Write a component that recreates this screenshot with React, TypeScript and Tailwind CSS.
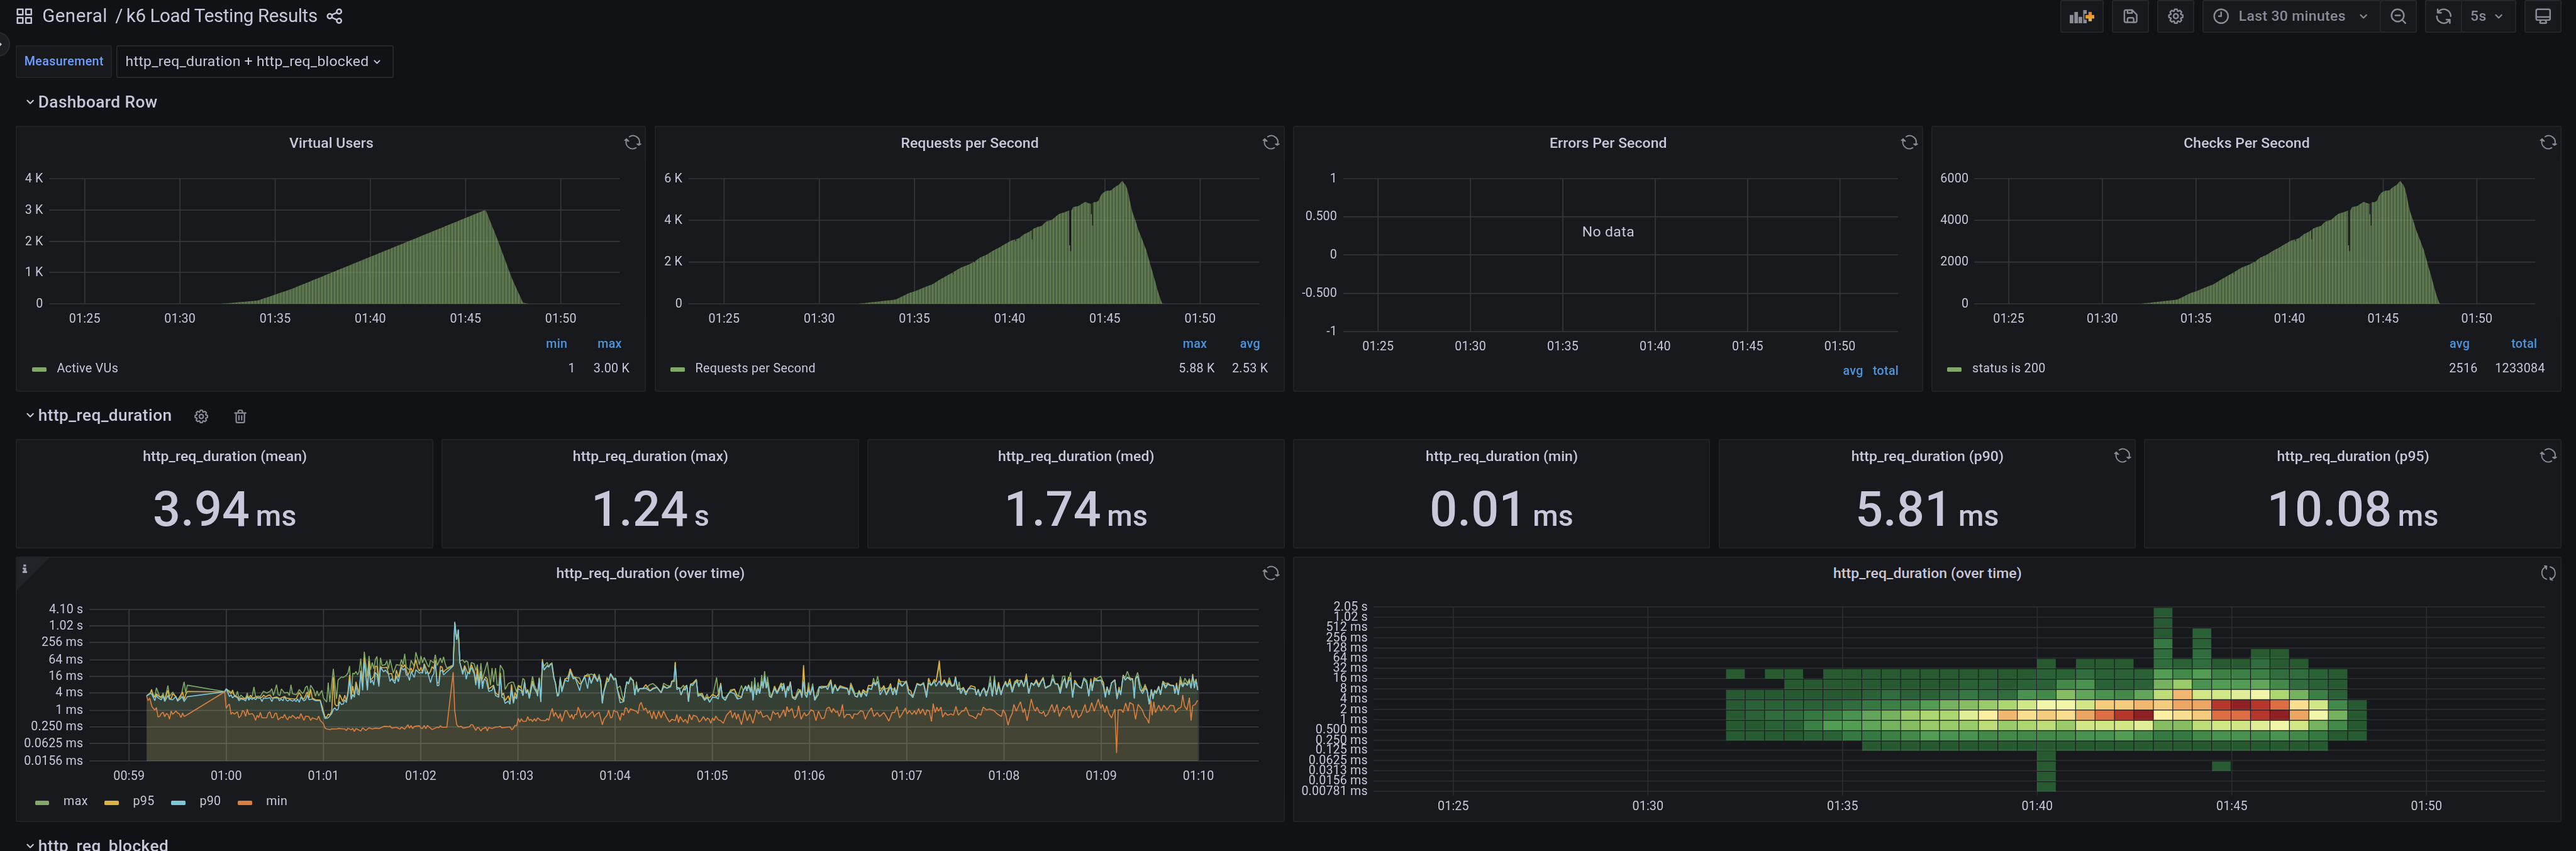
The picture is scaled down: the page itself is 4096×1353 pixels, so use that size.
import { Fragment, type ReactNode } from "react";

type Pt = [number, number];

/* ---------- icons ---------- */

const ICONS = {
  apps: "M10,13H3a1,1,0,0,0-1,1v7a1,1,0,0,0,1,1h7a1,1,0,0,0,1-1V14A1,1,0,0,0,10,13ZM9,20H4V15H9ZM21,2H14a1,1,0,0,0-1,1v7a1,1,0,0,0,1,1h7a1,1,0,0,0,1-1V3A1,1,0,0,0,21,2ZM20,9H15V4h5Zm1,4H14a1,1,0,0,0-1,1v7a1,1,0,0,0,1,1h7a1,1,0,0,0,1-1V14A1,1,0,0,0,21,13Zm-1,7H15V15h5ZM10,2H3A1,1,0,0,0,2,3v7a1,1,0,0,0,1,1h7a1,1,0,0,0,1-1V3A1,1,0,0,0,10,2ZM9,9H4V4H9Z",
  share: "M18,14a4,4,0,0,0-3.08,1.48l-5.1-2.35a3.64,3.64,0,0,0,0-2.26l5.1-2.35A4,4,0,1,0,14,6a4.17,4.17,0,0,0,.07.71L8.79,9.14a4,4,0,1,0,0,5.72l5.28,2.43A4.17,4.17,0,0,0,14,18a4,4,0,1,0,4-4ZM18,4a2,2,0,1,1-2,2A2,2,0,0,1,18,4ZM6,14a2,2,0,1,1,2-2A2,2,0,0,1,6,14Zm12,6a2,2,0,1,1,2-2A2,2,0,0,1,18,20Z",
  save: "m20.71 9.29-6-6a1 1 0 0 0-.32-.21A1.09 1.09 0 0 0 14 3H6a3 3 0 0 0-3 3v12a3 3 0 0 0 3 3h12a3 3 0 0 0 3-3v-8a1 1 0 0 0-.29-.71zM9 5h4v2H9zm6 14H9v-3a1 1 0 0 1 1-1h4a1 1 0 0 1 1 1zm4-1a1 1 0 0 1-1 1h-1v-3a3 3 0 0 0-3-3h-4a3 3 0 0 0-3 3v3H6a1 1 0 0 1-1-1V6a1 1 0 0 1 1-1h1v3a1 1 0 0 0 1 1h6a1 1 0 0 0 1-1V6.41l4 4z",
  cog: "M21.32,9.55l-1.89-.63.89-1.78A1,1,0,0,0,20.13,6L18,3.87a1,1,0,0,0-1.15-.19l-1.78.89-.63-1.89A1,1,0,0,0,13.5,2h-3a1,1,0,0,0-.95.68L8.92,4.57,7.14,3.68A1,1,0,0,0,6,3.87L3.87,6a1,1,0,0,0-.19,1.15l.89,1.78-1.89.63A1,1,0,0,0,2,10.5v3a1,1,0,0,0,.68.95l1.89.63-.89,1.78A1,1,0,0,0,3.87,18L6,20.13a1,1,0,0,0,1.15.19l1.78-.89.63,1.89a1,1,0,0,0,.95.68h3a1,1,0,0,0,.95-.68l.63-1.89,1.78.89A1,1,0,0,0,18,20.13L20.13,18a1,1,0,0,0,.19-1.15l-.89-1.78,1.89-.63A1,1,0,0,0,22,13.5v-3A1,1,0,0,0,21.32,9.55ZM20,12.78l-1.2.4A2,2,0,0,0,17.64,16l.57,1.14-1.1,1.1L16,17.64a2,2,0,0,0-2.79,1.16l-.4,1.2H11.22l-.4-1.2A2,2,0,0,0,8,17.64l-1.14.57-1.1-1.1L6.36,16A2,2,0,0,0,5.2,13.18L4,12.78V11.22l1.2-.4A2,2,0,0,0,6.36,8L5.79,6.89l1.1-1.1L8,6.36A2,2,0,0,0,10.82,5.2l.4-1.2h1.56l.4,1.2A2,2,0,0,0,16,6.36l1.14-.57,1.1,1.1L17.64,8a2,2,0,0,0,1.16,2.79l1.2.4ZM12,8a4,4,0,1,0,4,4A4,4,0,0,0,12,8Zm0,6a2,2,0,1,1,2-2A2,2,0,0,1,12,14Z",
  clock: "M12,2A10,10,0,1,0,22,12,10,10,0,0,0,12,2Zm0,18a8,8,0,1,1,8-8A8,8,0,0,1,12,20ZM12,6a1,1,0,0,0-1,1v4H9a1,1,0,0,0,0,2h3a1,1,0,0,0,1-1V7A1,1,0,0,0,12,6Z",
  zoomOut: "M21.71,20.29,18,16.61A9,9,0,1,0,16.61,18l3.68,3.68a1,1,0,0,0,1.42,0A1,1,0,0,0,21.71,20.29ZM11,18a7,7,0,1,1,7-7A7,7,0,0,1,11,18Zm3-8H8a1,1,0,0,0,0,2h6a1,1,0,0,0,0-2Z",
  sync: "M19.91,15.51H15.38a1,1,0,0,0,0,2h2.4A8,8,0,0,1,4,12a1,1,0,0,0-2,0,10,10,0,0,0,16.88,7.23V21a1,1,0,0,0,2,0V16.5A1,1,0,0,0,19.91,15.51ZM12,2A10,10,0,0,0,5.12,4.77V3a1,1,0,0,0-2,0V7.5a1,1,0,0,0,1,1h4.5a1,1,0,0,0,0-2H6.22A8,8,0,0,1,20,12a1,1,0,0,0,2,0A10,10,0,0,0,12,2Z",
  monitor: "M19,2H5A3,3,0,0,0,2,5V15a3,3,0,0,0,3,3H7.64l-.58,1a2,2,0,0,0,0,2,2,2,0,0,0,1.75,1h6.46A2,2,0,0,0,17,21a2,2,0,0,0,0-2l-.59-1H19a3,3,0,0,0,3-3V5A3,3,0,0,0,19,2ZM8.77,20,10,18H14l1.2,2ZM20,15a1,1,0,0,1-1,1H5a1,1,0,0,1-1-1V14H20Zm0-3H4V5A1,1,0,0,1,5,4H19a1,1,0,0,1,1,1Z",
  down: "M17,9.17a1,1,0,0,0-1.41,0L12,12.71,8.46,9.17a1,1,0,0,0-1.41,0,1,1,0,0,0,0,1.42l4.24,4.24a1,1,0,0,0,1.42,0L17,10.59A1,1,0,0,0,17,9.17Z",
  trash: "M10,18a1,1,0,0,0,1-1V11a1,1,0,0,0-2,0v6A1,1,0,0,0,10,18ZM20,6H16V5a3,3,0,0,0-3-3H11A3,3,0,0,0,8,5V6H4A1,1,0,0,0,4,8H5V19a3,3,0,0,0,3,3h8a3,3,0,0,0,3-3V8h1a1,1,0,0,0,0-2ZM10,5a1,1,0,0,1,1-1h2a1,1,0,0,1,1,1V6H10Zm7,14a1,1,0,0,1-1,1H8a1,1,0,0,1-1-1V8H17Zm-3-1a1,1,0,0,0,1-1V11a1,1,0,0,0-2,0v6A1,1,0,0,0,14,18Z",
};

function Icon({ name, className }: { name: keyof typeof ICONS; className: string }) {
  return (
    <svg viewBox="0 0 24 24" className={`shrink-0 fill-current ${className}`}>
      <path d={ICONS[name]} />
    </svg>
  );
}

function LoadingIcon({ turned }: { turned?: boolean }) {
  return (
    <svg
      viewBox="32 42 104 104"
      className={`absolute top-[7.4px] right-[4.4px] size-[17.3px] fill-none stroke-[#8b8b97] ${turned ? "rotate-[48deg]" : ""}`}
      strokeWidth="7"
      strokeLinecap="round"
      strokeLinejoin="round"
    >
      <path d="M64 62A38 38 0 0 1 121 106M103 126A38 38 0 0 1 47 82" />
      <path d="M108 104L119 112L132 104ZM36 83L47 73L61 88Z" strokeWidth="5" className="fill-[#8b8b97]" />
    </svg>
  );
}

function AddPanelIcon() {
  return (
    <svg viewBox="0 0 24.2 12.8" className="h-[12.8px] w-[24.2px]">
      <defs>
        <linearGradient id="plus" x1="0" y1="0" x2="0" y2="1">
          <stop offset="0" stopColor="#e0783f" />
          <stop offset="1" stopColor="#efbd31" />
        </linearGradient>
      </defs>
      <path
        d="M0 4.7h3.5v8.1H0zM4.5 1.8H8v11H4.5zM8.6 6.5h3.5v6.3H8.6zM13.1 0h3.4v3.7h-2.2v5.6h2.2v3.5h-3.4z"
        className="fill-[#8b8b97]"
      />
      <path d="M18.2 1.8h3.2v3h2.8v3.5h-2.8v2.5h-3.2V8.3h-2.9V4.8h2.9z" fill="url(#plus)" />
    </svg>
  );
}

/* ---------- shared pieces ---------- */

function Panel({ title, children, loading, turned, className = "" }: { title: string; children?: ReactNode; loading?: boolean; turned?: boolean; className?: string }) {
  return (
    <section className={`relative flex flex-col rounded-[2px] bg-[#18191d] ring-1 ring-[#222327] ring-inset ${className}`}>
      <h2 className="flex h-8 shrink-0 items-center justify-center pt-[2.4px] pl-[0.6px] text-sm font-medium tracking-[0.06px]">{title}</h2>
      {loading && <LoadingIcon turned={turned} />}
      {children}
    </section>
  );
}

function RowTitle({ children, actions }: { children: ReactNode; actions?: boolean }) {
  return (
    <div className="flex h-[30px] shrink-0 items-center pl-[5.6px]">
      <Icon name="down" className="size-4" />
      <span className="pt-px text-base font-medium tracking-[0.27px]">{children}</span>
      {actions && (
        <span className="flex items-center gap-[21.6px] pt-[2px] pl-[20.6px] text-[#8b8b97]">
          <Icon name="cog" className="size-4" />
          <Icon name="trash" className="size-4" />
        </span>
      )}
    </div>
  );
}

/* Cartesian frame: grid lines, right-aligned y labels and centred x labels. */
function Grid({ x0, x1, ys, xs, y1, stroke }: { x0: number; x1: number; ys: number[]; xs: number[]; y1?: number; stroke: string }) {
  const bottom = y1 ?? ys[ys.length - 1];
  return (
    <path
      d={ys.map((y) => `M${x0} ${y}H${x1}`).join("") + xs.map((x) => `M${x} ${ys[0]}V${bottom}`).join("")}
      stroke={stroke}
      strokeWidth="2"
      fill="none"
    />
  );
}

function Labels({ right, ys, yLabels, xs, xLabels, baseline, dy = 7 }: { right: number; ys: number[]; yLabels: string[]; xs: number[]; xLabels: string[]; baseline: number; dy?: number }) {
  return (
    <g className="fill-[#c9c8da] text-[24px] tracking-[0.2px]">
      {yLabels.map((t, i) => (
        <text key={t} x={right} y={ys[i] + dy} textAnchor="end">{t}</text>
      ))}
      {xLabels.map((t, i) => (
        <text key={t} x={xs[i]} y={baseline} textAnchor="middle">{t}</text>
      ))}
    </g>
  );
}

const ticks = (start: number, step: number, n: number) => Array.from({ length: n }, (_, i) => start + step * i);
const FIVE_MIN = ["01:25", "01:30", "01:35", "01:40", "01:45", "01:50"];

function interpolate(points: Pt[], x: number) {
  for (let i = 1; i < points.length; i++) {
    const [xa, ya] = points[i - 1];
    const [xb, yb] = points[i];
    if (x >= xa && x <= xb) return ya + ((yb - ya) * (x - xa)) / (xb - xa);
  }
  return 0;
}

/* ---------- bar charts ---------- */

/* points: [ticks since 01:25, fraction of the full scale] */
const VUS: Pt[] = [[1.437, 0], [1.816, 0.026], [2.17, 0.118], [4.21, 0.751], [4.34, 0.504], [4.486, 0.204], [4.603, 0.008], [4.67, 0]];

const RPS_RAW: Pt[] = [[520, 1043], [608, 1020], [640, 983], [654, 973], [680, 948], [695, 935], [720, 900], [745, 868], [765, 840], [785, 822], [800, 803], [810, 785], [825, 770], [845, 742], [857, 728], [870, 710], [885, 690], [905, 676], [918, 652], [933, 635], [940, 622], [950, 612], [960, 606], [970, 582], [985, 572], [993, 555], [1003, 537], [1015, 530], [1027, 518], [1033, 518], [1036, 500], [1048, 495], [1055, 485], [1065, 470], [1072, 478], [1079, 482], [1085, 472], [1092, 473], [1098, 462], [1103, 432], [1108, 420], [1118, 407], [1127, 408], [1134, 392], [1142, 380], [1148, 372], [1152, 357], [1157, 350], [1160, 378], [1162, 372], [1167, 402], [1171, 440], [1175, 490], [1180, 537], [1186, 572], [1193, 625], [1204, 690], [1213, 745], [1222, 820], [1232, 900], [1242, 985], [1251, 1043]];
const RPS_DIPS_RAW: [number, number, number][] = [[746, 878, 1], [798, 812, 1], [897, 692, 1.5], [937, 682, 1.5], [1028, 715, 2.6], [1030, 748, 1.8], [1080, 540, 1.6], [1083, 604, 1.8]];
const toTick = (px: number) => (px * 0.80357 - 155) / 184.8;
const toShare = (py: number) => (1044 - py) / 704;
const RPS: Pt[] = RPS_RAW.map(([x, y]) => [toTick(x), toShare(y)]);
const RPS_DIPS = RPS_DIPS_RAW.map(([x, y, w]) => [toTick(x), toShare(y), w]);

function Bars({ points, dips = [], x0, step, top, bottom }: { points: Pt[]; dips?: number[][]; x0: number; step: number; top: number; bottom: number }) {
  const w = step / 60;
  const h = bottom - top;
  const first = Math.floor((points[0][0] * step) / w);
  const last = Math.ceil((points[points.length - 1][0] * step) / w);
  let light = "";
  let dark = "";
  for (let i = first; i < last; i++) {
    const a = Math.max(0, interpolate(points, (i * w) / step)) * h;
    const b = Math.max(0, interpolate(points, ((i + 1) * w) / step)) * h;
    const bar = `M${(x0 + i * w).toFixed(2)} ${bottom}V${(bottom - a).toFixed(2)}L${(x0 + (i + 1) * w).toFixed(2)} ${(bottom - b).toFixed(2)}V${bottom}z`;
    if (i % 2) light += bar;
    else dark += bar;
  }
  return (
    <g>
      <path d={dark} fill="#82a96a" fillOpacity="0.52" />
      <path d={light} fill="#82a96a" fillOpacity="0.7" />
      {dips.map(([t, v, dw], i) => (
        <rect key={i} x={x0 + t * step - dw / 2} y={bottom - interpolate(points, t) * h - 3} width={dw} height={(interpolate(points, t) - v) * h + 3} fill="#18191d" />
      ))}
    </g>
  );
}

function Swatch({ className }: { className: string }) {
  return <span className={`h-1 w-3.5 shrink-0 rounded-[1px] ${className}`} />;
}

function LegendTable({ name, heads, values, width }: { name?: string; heads: [string, string]; values?: [string, string]; width: string }) {
  return (
    <div className="shrink-0 text-xs tracking-[0.2px]">
      <div className="flex h-[23px] items-center justify-end pt-px pr-[23.6px] font-medium text-[#4d94dd]">
        <span>{heads[0]}</span>
        <span className={`text-right ${width}`}>{heads[1]}</span>
      </div>
      {values && (
        <div className="flex h-[24.5px] items-center pr-[16px] pl-[15.5px]">
          <Swatch className="mt-[3px] mr-[10.2px] bg-[#82a96a]" />
          <span className="grow pt-[0.6px]">{name}</span>
          <span className="pt-[0.6px]">{values[0]}</span>
          <span className={`pt-[0.6px] text-right ${width}`}>{values[1]}</span>
        </div>
      )}
    </div>
  );
}

function BarPanel({ title, left, points, dips, yLabels, x0, x1, first, step, labelRight, legend }: {
  title: string; left: number; points: Pt[]; dips?: number[][]; yLabels: string[]; x0: number; x1: number; first: number; step: number; labelRight: number; legend: ReactNode;
}) {
  const n = yLabels.length;
  const ys = ticks(347, 243 / (n - 1), n).map((y) => Math.round(y));
  const xs = ticks(first, step, 6);
  return (
    <Panel title={title} loading>
      <svg viewBox={`${left} 308 1223.25 336`} preserveAspectRatio="none" className="h-[168px] w-full shrink-0">
        <Grid x0={x0} x1={x1} ys={ys} xs={xs} stroke="#36373b" />
        <Bars points={points} dips={dips} x0={first} step={step} top={347} bottom={590} />
        <Labels right={labelRight} ys={ys} yLabels={yLabels} xs={xs} xLabels={FIVE_MIN} baseline={626.5} />
      </svg>
      {legend}
    </Panel>
  );
}

function ErrorsPanel() {
  const ys = [347, 421, 495, 570, 644];
  const xs = ticks(2674.6, 179.3, 6);
  return (
    <Panel title="Errors Per Second" loading>
      <svg viewBox="2509.5 308 1223.25 388" preserveAspectRatio="none" className="h-[194px] w-full shrink-0">
        <Grid x0={2607} x1={3684} ys={ys} xs={xs} stroke="#36373b" />
        <Labels right={2595} ys={ys} yLabels={["1", "0.500", "0", "-0.500", "-1"]} xs={xs} xLabels={FIVE_MIN} baseline={680.5} />
        <text x="3121.5" y="459" textAnchor="middle" className="fill-[#c9c8da] text-[28px] tracking-[0.5px]">No data</text>
      </svg>
      <LegendTable heads={["avg", "total"]} width="w-[34.5px]" />
    </Panel>
  );
}

/* ---------- stat row ---------- */

const STATS: { name: string; value: string; unit: string; loading?: boolean }[] = [
  { name: "mean", value: "3.94", unit: "ms" },
  { name: "max", value: "1.24", unit: "s" },
  { name: "med", value: "1.74", unit: "ms" },
  { name: "min", value: "0.01", unit: "ms" },
  { name: "p90", value: "5.81", unit: "ms", loading: true },
  { name: "p95", value: "10.08", unit: "ms", loading: true },
];

/* ---------- time series ---------- */

const parse = (s: string): Pt[] => s.trim().split(/\s+/).map((p) => p.split(",").map(Number) as Pt);
const early = (s: string): Pt[] => parse(s).map(([x, y]) => [280 + x * 0.61862, 1180 + y / 3]);
const late = (s: string): Pt[] => parse(s).map(([x, y]) => [1250 + x * 0.80357, 830 + y * 0.52423]);

const P90_TAIL = "1250,312 1255,362 1265,338 1270,345 1275,328 1280,332 1286,408 1291,440 1297,514 1301,508 1306,412 1311,490 1321,420 1331,428 1337,370 1347,415 1352,405 1367,482 1372,440 1383,402 1392,470 1397,400 1403,440 1413,395 1423,430 1428,400 1433,440 1438,556 1443,490 1453,428 1458,428 1464,384 1474,420 1480,410 1485,475 1494,552 1505,546 1510,475 1515,430 1520,443 1526,410 1535,425 1540,508 1545,450 1550,490 1555,470 1566,470";
const P90_LATE = "5,965 15,975 22,968 32,962 42,982 48,960 56,965 65,960 68,940 73,940 76,880 80,970 86,965 90,990 96,968 100,972 104,955 108,1015 113,950 118,955 127,935 131,995 137,990 141,995 147,1010 153,1000 159,1017 166,998 176,1000 180,1005 186,952 190,1000 197,1010 205,985 210,980 219,985 226,1005 236,1000 240,975 246,960 249,975 253,955 258,980 261,960 264,1010 268,950 272,990 276,965 280,985 285,940 288,965 292,922 296,965 299,945 304,995 308,1000 316,965 322,985 332,955 335,975 338,950 343,1000 347,960 350,975 354,945 359,1000 366,1007 373,985 378,975 382,1000 386,940 390,990 394,1000 398,970 402,990 408,960 413,1010 421,990 424,960 429,965 440,960 444,970 452,940 456,985 462,955 468,975 474,962 492,968 496,990 500,960 511,995 516,998 520,980 525,998 530,978 538,995 543,965 550,970 555,945 560,955 565,940 571,990 580,965 586,990 596,960 602,990 606,965 610,990 616,945 624,958 634,942 640,985 645,990 650,1000 660,950 668,955 676,948 683,1000 688,945 694,955 702,940 706,958 714,938 719,955 726,940 733,960 738,945 744,958 750,955 753,925 758,970 762,965 766,985 772,965 778,990 784,968 790,965 800,970 803,990 808,970 812,995 817,975 822,965 827,995 832,970 837,945 842,995 847,935 852,990 857,955 863,990 868,960 874,945 878,960 884,945 890,980 896,950 902,940 906,960 912,935 918,960 924,930 930,985 936,945 942,955 948,940 954,960 960,940 965,930 970,965 976,960 982,955 988,930 994,950 1000,950 1006,985 1012,945 1017,928 1021,965 1026,940 1031,930 1036,1000 1041,945 1050,958 1057,965 1063,930 1070,945 1075,995 1080,940 1083,975 1088,935 1097,938 1104,935 1110,958 1115,1000 1119,960 1124,990 1130,945 1138,935 1143,1005 1148,970 1152,990 1158,920 1163,935 1168,925 1176,935 1181,930 1185,1003 1188,930 1193,920 1199,970 1205,985 1211,965 1216,975 1221,1025 1226,970 1230,1005 1234,975 1238,985 1244,960 1248,990 1254,945 1260,965 1266,950 1272,955 1280,955 1283,985 1287,955 1291,990 1296,945 1302,960 1307,945 1313,955 1318,940 1322,965 1326,920 1330,965 1334,935 1338,972";

const p90: Pt[] = [
  ...early("8,512 18,500 24,500 34,540 39,508 44,524 54,535 60,514 65,545 75,510 80,533 90,535 100,516 105,543 116,525 120,516 126,545 136,517 253,489 258,470 268,516 273,506 278,524 283,514 293,522 298,541 304,530 314,535 319,541 324,516 329,537 334,523 339,533 345,524 350,535 355,522 365,524 370,545 375,524 385,527 395,522 401,545 406,524 420,524 425,541 431,530 436,541 441,516 446,535 451,543 456,533 466,543 472,535 477,545 482,530 487,550 492,520 502,541 507,535 512,508 518,535 528,530 538,540 553,540 560,600 568,644 578,640 589,615 594,590 599,582 604,595 609,590 614,545 619,562 625,560 630,535 635,552 640,500 645,415 650,533 655,505 660,520 665,450 670,500 675,508 680,370 686,480 691,310 701,480 706,345 711,437 716,420 721,450 726,375 731,388 737,458 742,345 752,373 757,362 767,385 772,428 777,412 787,440 792,395 798,430 808,345 813,362 818,352 823,390 828,395 833,422 838,370 848,405 853,360 864,380 869,375 874,380 879,333 884,385 889,370 899,435 904,400 909,385 914,322 920,453 925,452 930,368 935,362 940,390 970,338 975,85 981,185 986,130 991,320 1000,388 1006,345 1011,415 1016,375 1021,385 1027,345 1036,385 1041,450 1046,385 1051,472 1057,380 1062,470 1067,415 1073,420 1082,486 1092,480 1097,455 1103,510 1113,520 1118,395 1123,520 1128,524 1133,556 1143,543 1148,562 1153,475 1159,556 1164,515 1169,530 1174,470 1184,482 1189,512 1194,432 1199,498 1204,482 1209,528 1219,440 1225,472 1230,478 1235,514 1240,412 1245,548 " + P90_TAIL),
  ...late(P90_LATE),
];

/* The upper percentiles track p90 closely in the second half of the run, with a few isolated spikes. */
const follow = (source: string, project: (s: string) => Pt[], amount: number, seed: number, spikes: Record<number, number>): Pt[] => {
  const keys = parse(source).map(([x]) => x);
  return project(source).map(([x, y], i) => {
    const spike = spikes[keys[i]];
    if (spike !== undefined) return project(`${keys[i]},${spike}`)[0];
    const r = Math.abs(Math.sin((i + 1) * seed) * 43758.5453) % 1;
    return [x, y - amount * r * r * r];
  });
};

const p95: Pt[] = [
  ...early("8,512 19,498 24,475 29,515 34,520 39,500 49,520 59,510 65,535 75,480 80,525 85,530 90,500 100,515 105,538 121,490 126,535 131,505 136,486 253,489 258,472 273,500 278,478 283,510 293,518 298,530 304,525 319,530 324,512 329,525 334,508 340,525 350,520 360,525 370,520 376,508 381,518 391,508 396,508 401,525 416,518 426,528 441,515 446,525 466,530 477,530 487,492 497,525 502,530 512,490 518,525 523,475 528,525 538,535 553,537 560,580 568,636 573,636 578,618 583,625 589,600 594,402 599,560 604,570 609,568 614,505 624,545 630,508 635,540 640,490 645,390 650,520 655,455 660,510 665,430 675,500 680,365 686,430 691,290 701,470 706,310 711,420 721,400 726,340 731,340 737,440 742,342 747,348 757,348 762,345 767,385 777,382 782,422 787,422 792,362 798,405 808,330 813,345 818,330 828,392 838,350 843,375 853,302 859,350 864,368 869,345 874,375 879,325 889,370 894,385 899,370 904,342 909,355 914,305 920,440 925,432 930,340 935,345 940,375 945,362 970,336 975,85 981,185 986,128 991,318 1000,375 1006,335 1016,380 1021,370 1027,330 1036,370 1041,430 1046,352 1051,440 1057,368 1062,440 1072,402 1077,415 1082,472 1097,450 1103,495 1113,510 1118,378 1123,510 1128,495 1133,540 1143,512 1148,545 1153,445 1159,540 1164,492 1169,520 1174,455 1184,465 1189,508 1194,430 1199,490 1204,475 1209,520 1219,425 1225,470 1235,505 1240,410 1245,545"),
  ...follow(P90_TAIL, early, 6, 12.9898, { 1321: 412, 1331: 410, 1337: 354, 1367: 443, 1392: 396, 1494: 525, 1505: 543 }),
  ...follow(P90_LATE, late, 9, 12.9898, { 76: 868, 386: 880, 714: 863, 354: 940 }),
];

const max: Pt[] = [
  ...early("8,512 18,498 24,485 34,520 39,465 44,490 49,515 54,525 60,495 65,535 75,452 80,515 90,490 105,535 116,515 126,430 131,495 136,450 253,487 258,472 273,490 278,495 288,515 293,485 298,525 304,508 314,525 319,525 324,495 329,535 340,510 345,460 350,515 365,515 375,485 385,495 396,485 401,470 406,510 416,447 421,505 426,510 431,472 441,495 451,492 456,510 461,447 466,500 477,505 482,495 487,475 497,498 502,488 507,462 512,455 518,505 523,450 533,480 538,515 543,482 548,512 558,480 563,525 573,548 578,435 583,548 589,440 594,355 604,530 609,420 619,402 625,405 635,392 640,378 645,338 650,510 655,380 660,385 665,370 670,390 675,370 680,295 686,440 691,255 701,400 706,280 711,360 716,318 721,355 726,300 731,283 737,440 742,290 747,335 757,330 762,308 767,355 772,300 782,380 792,330 803,335 808,300 813,330 818,268 823,345 833,362 838,305 848,340 853,258 864,330 869,280 874,320 879,288 889,330 894,345 899,305 909,320 914,272 920,335 930,292 935,320 940,285 945,325 950,350 970,332 975,80 981,185 986,125 991,310 1000,302 1006,318 1011,308 1016,315 1021,375 1027,318 1036,325 1041,365 1046,330 1051,430 1057,322 1062,415 1067,380 1077,315 1087,450 1092,350 1097,432 1103,350 1108,450 1113,450 1118,333 1128,365 1133,475 1143,440 1153,432 1159,432 1169,490 1174,450 1184,460 1189,410 1194,420 1199,498 1204,475 1209,510 1219,398 1225,450 1235,490 1240,405 1245,540"),
  ...follow(P90_TAIL, early, 9, 7.233, { 1337: 358, 1331: 395, 1367: 408, 1392: 384, 1403: 385, 1494: 455 }),
  ...follow(P90_LATE, late, 14, 7.233, { 76: 870, 176: 925, 268: 925, 386: 900, 714: 880, 219: 968, 236: 955, 500: 945 }),
];

const min: Pt[] = [
  ...early("8,514 13,540 18,525 25,575 34,595 39,580 44,635 49,632 54,615 60,608 65,634 70,615 75,620 80,648 85,600 90,620 100,600 105,612 110,615 116,638 121,612 126,632 136,622 253,489 258,585 263,568 268,560 273,620 278,608 283,618 293,605 298,640 304,628 309,598 314,603 319,632 324,590 329,620 340,615 345,628 350,655 355,625 360,638 365,608 370,640 385,640 390,612 395,605 401,640 406,638 411,614 416,614 421,652 431,635 436,640 441,620 446,640 451,652 456,632 461,640 466,625 477,645 482,635 487,644 492,615 502,655 507,630 517,632 523,655 528,640 543,650 548,630 553,655 563,675 568,700 573,705 584,709 589,704 604,705 609,702 630,705 635,714 640,700 650,710 655,702 660,720 665,702 680,717 686,698 696,714 706,698 716,705 726,700 737,703 752,690 762,690 767,692 772,688 777,700 792,695 803,706 808,694 818,706 828,680 833,700 838,685 843,703 848,690 864,686 869,700 874,702 879,684 884,704 889,684 904,708 914,700 920,694 925,698 930,686 935,695 950,695 970,374 975,600 981,678 986,692 996,690 1001,700 1021,692 1026,680 1031,680 1041,714 1046,696 1051,700 1057,717 1062,703 1067,702 1072,692 1077,717 1082,696 1092,702 1103,694 1113,692 1118,690 1123,698 1148,692 1154,710 1159,700 1164,684 1169,686 1174,643 1179,665 1184,645 1189,660 1199,660 1204,633 1209,655 1214,648 1219,662 1225,645 1230,660 1235,640 1245,655 1260,656 1265,645 1270,655 1276,610 1281,585 1286,633 1291,608 1301,644 1306,615 1311,662 1321,600 1326,598 1337,640 1342,620 1347,648 1352,620 1357,622 1362,578 1367,600 1372,640 1383,608 1388,640 1408,602 1413,636 1418,620 1428,608 1438,680 1443,648 1453,625 1458,595 1464,640 1469,636 1474,596 1480,604 1485,605 1494,655 1499,612 1505,625 1510,582 1515,584 1520,612 1526,588 1545,602 1550,615 1555,565 1560,550 1566,585"),
  ...late("0,1045 5,1038 10,1058 14,1048 20,1078 24,1050 30,1080 36,1050 42,1075 48,1050 54,1070 62,1090 68,1080 76,1085 80,1062 84,1092 88,1070 96,1090 100,1080 106,1095 110,1062 116,1082 120,1065 128,1070 134,1090 138,1085 144,1070 150,1085 154,1075 158,1080 162,1095 166,1075 170,1085 174,1068 180,1082 186,1085 192,1095 200,1065 210,1048 214,1075 220,1055 224,1080 228,1060 236,1100 244,1048 250,1085 256,1060 264,1095 272,1045 278,1060 282,1050 288,1072 298,1065 306,1085 312,1050 318,1062 324,1055 328,1075 338,1045 342,1070 346,1033 350,1052 358,1040 364,1075 370,1065 374,1030 380,1080 388,1055 392,1068 398,1060 404,1045 410,1050 416,1085 422,1050 430,1078 436,1075 442,1040 448,1035 454,1055 458,1040 464,1055 468,1050 472,1070 476,1055 480,1025 484,1075 490,1062 498,1062 504,1078 508,1060 516,1062 524,1048 530,1052 535,1080 542,1055 550,1038 556,1070 564,1055 570,1070 580,1055 586,1070 592,1087 600,1055 606,1055 612,1033 618,1075 624,1060 632,1038 636,1060 642,1048 648,1062 654,1048 658,1062 664,1040 668,1060 674,1042 680,1065 684,1045 690,1050 695,1088 699,1022 704,1055 708,1035 712,1050 718,1035 722,1072 728,1055 734,1065 742,1060 748,1065 754,1032 760,1065 768,1050 774,1048 778,1035 786,1065 796,1070 802,1078 808,1058 814,1065 820,1035 828,1045 836,1042 846,1048 854,1060 864,1070 868,1045 874,1060 880,1102 884,1078 890,1058 894,1025 900,1050 904,1035 910,1015 916,1055 920,1040 926,1085 932,1040 936,1005 942,1040 946,1050 950,1035 956,1055 962,1058 966,1050 970,1070 976,1060 986,1025 992,1055 998,1025 1004,1070 1010,1045 1014,1035 1020,1045 1028,1030 1036,1075 1044,1045 1050,1075 1056,1065 1066,1025 1070,1055 1076,1050 1082,1018 1088,1050 1098,1005 1104,1040 1108,1025 1114,1055 1118,1030 1124,1060 1130,1075 1134,1058 1138,1042 1142,1205 1146,1045 1154,1045 1158,1055 1164,1020 1170,1050 1174,1018 1182,1025 1188,1080 1194,1025 1204,1045 1210,1068 1216,1080 1220,1095 1225,1010 1228,1065 1232,1015 1236,1055 1244,1028 1250,1050 1256,1028 1264,1045 1272,1028 1280,1030 1284,1055 1290,1042 1298,1035 1302,990 1306,1030 1312,1045 1318,1000 1322,1085 1326,1030 1332,1025 1338,1010"),
];

const SERIES: { name: string; data: Pt[]; line: string; area: string; swatch: string }[] = [
  { name: "max", data: max, line: "#7fa765", area: "#222825", swatch: "bg-[#82a96a]" },
  { name: "p95", data: p95, line: "#deb146", area: "#2b2f29", swatch: "bg-[#deb146]" },
  { name: "p90", data: p90, line: "#7cc5da", area: "#363f34", swatch: "bg-[#7cc5da]" },
  { name: "min", data: min, line: "#da7e3f", area: "#434433", swatch: "bg-[#da7e3f]" },
];

const toLine = (data: Pt[]) => data.map(([x, y], i) => `${i ? "L" : "M"}${x.toFixed(1)} ${y.toFixed(1)}`).join("");

function TimeSeriesPanel() {
  const ys = [1183, 1215, 1247, 1281, 1313, 1345, 1379, 1411, 1443, 1477];
  const xs = ticks(251, 188.7, 12);
  return (
    <Panel title="http_req_duration (over time)" loading>
      <svg viewBox="0 0 32 32" className="absolute top-px left-px size-8">
        <path d="M0 0H32L0 32Z" fill="#212328" />
        <path d="M6.2 7h2.6v2H6.2zM5.5 10h3.4v3.5h.9v1.7H5.4v-1.7h1v-1.9h-.9z" fill="#a3a3af" />
      </svg>
      <svg viewBox="31 1144 2462.5 386" preserveAspectRatio="none" className="h-[193px] w-full shrink-0">
        {SERIES.map((s) => (
          <path key={s.name} d={`${toLine(s.data)}V1477H${s.data[0][0]}Z`} fill={s.area} />
        ))}
        <g className="mix-blend-screen">
          <Grid x0={174} x1={2444} ys={ys} xs={xs} stroke="#252628" />
        </g>
        {SERIES.map((s) => (
          <path key={s.name} d={toLine(s.data)} fill="none" stroke={s.line} strokeWidth="2" strokeLinejoin="bevel" />
        ))}
        <Labels
          right={162}
          ys={ys}
          yLabels={["4.10 s", "1.02 s", "256 ms", "64 ms", "16 ms", "4 ms", "1 ms", "0.250 ms", "0.0625 ms", "0.0156 ms"]}
          xs={xs}
          xLabels={["00:59", "01:00", "01:01", "01:02", "01:03", "01:04", "01:05", "01:06", "01:07", "01:08", "01:09", "01:10"]}
          baseline={1514.5}
        />
      </svg>
      <div className="flex h-[25px] shrink-0 items-center gap-4 pt-[0.6px] pl-[18.4px] text-xs tracking-[0.2px]">
        {SERIES.map((s) => (
          <span key={s.name} className="flex items-center gap-[13.8px]">
            <Swatch className={`mt-[3px] ${s.swatch}`} />
            {s.name}
          </span>
        ))}
      </div>
    </Panel>
  );
}

/* ---------- heatmap ---------- */

const HEAT: Record<string, string> = {
  a: "#285a32", b: "#2b6137", c: "#306c3d", d: "#367842", e: "#3c8046", f: "#43894a", g: "#4a9250", h: "#529c54",
  i: "#60a55a", j: "#74b25f", k: "#86bd63", l: "#9acb6a", m: "#acd66f", n: "#bcdd78", o: "#d1e786", p: "#e1ee98",
  q: "#f2f6a8", r: "#fdefa1", s: "#f9de90", t: "#f5cb7d", u: "#f1b76f", v: "#eda662", w: "#dd6e44", x: "#b5372c", y: "#8f2125",
};

/* One string per bucket from the top, one letter per column. */
const HEAT_ROWS = [
  "......................a..........",
  "......................a..........",
  "......................a.b........",
  "......................d.b........",
  "......................c.c..aa....",
  "................a.aaa.cbcaacaa...",
  "a.aa.aaaaaaaaaaabbcbbbhfheeeccba.",
  "...aaaaaaaaabbabbfgbbbjlghhifcba.",
  "aaaaaaabcbbcdccgfkigfinuoopqmjeb.",
  "abbbbbcdefhjklmoqqotTutvvxyxwsofa".replace("T", ""),
  "abccdegijlmmprustsvwxyrstwwxyvqja",
  "aabbehhijkllln lmnlooopkknoopqojfa".replace(" ", ""),
  "aaaabbddefhggfffffgghfddfggfgfdaa",
  ".......aaaaaaaaaaaaaaaaaaaaaaaa..",
  "................a................",
  "................a........a.......",
  "................a................",
  "................a................",
];
HEAT_ROWS[9] = "abbbbbcdefhjklmoqqottutvvxyxwsofa";
HEAT_ROWS[11] = "aabbehhijkllnnlmnlooopkknoopqojfa".replace("kllnn", "kllln");

function HeatmapPanel() {
  const ys = [1178, 1198, 1218, 1238, 1258, 1277, 1297, 1317, 1337, 1357, 1377, 1397, 1417, 1437, 1456, 1476, 1496, 1516, 1536];
  const xs = ticks(2820.6, 377.8, 6);
  return (
    <Panel title="http_req_duration (over time)" loading turned>
      <svg viewBox="2509.5 1144 2462.5 446" preserveAspectRatio="none" className="h-[223px] w-full shrink-0">
        {HEAT_ROWS.map((row, r) => (
          <Fragment key={r}>
            {[...row].map((c, i) => c !== "." && (
              <rect key={i} x={3350 + 37.73 * i} y={ys[r] + 2} width="36.3" height="18.3" fill={HEAT[c]} />
            ))}
          </Fragment>
        ))}
        <g className="opacity-[0.085]">
          <Grid x0={2666} x1={4940} ys={ys} xs={xs} y1={1544} stroke="#ffffff" />
        </g>
        <Labels
          right={2654.5}
          ys={ys}
          yLabels={["2.05 s", "1.02 s", "512 ms", "256 ms", "128 ms", "64 ms", "32 ms", "16 ms", "8 ms", "4 ms", "2 ms", "1 ms", "0.500 ms", "0.250 ms", "0.125 ms", "0.0625 ms", "0.0313 ms", "0.0156 ms", "0.00781 ms"]}
          xs={xs}
          xLabels={FIVE_MIN}
          baseline={1572}
        />
      </svg>
    </Panel>
  );
}

/* ---------- toolbar ---------- */

const BUTTON = "flex h-8 items-center justify-center rounded-[2px] bg-[#18191d] ring-1 ring-[#27282d] ring-inset";

function Header() {
  return (
    <header className="flex h-8 shrink-0 items-center">
      <Icon name="apps" className="-ml-[0.7px] size-[18px]" />
      <h1 className="flex items-center pl-[8.2px] text-lg leading-none">
        <span className="w-[70.9px] tracking-[0.3px]">General</span>
        <span className="w-[10.7px]">/</span>
        <span className="w-[192.8px] tracking-[-0.22px] whitespace-nowrap">k6 Load Testing Results</span>
      </h1>
      <Icon name="share" className="size-[18px]" />
      <div className="ml-auto flex gap-2 self-start text-sm font-medium tracking-[0.22px] text-[#8b8b97]">
        <div className={`w-[42px] ${BUTTON}`}><AddPanelIcon /></div>
        <div className={`w-9 ${BUTTON}`}><Icon name="save" className="size-[18px]" /></div>
        <div className={`w-9 ${BUTTON}`}><Icon name="cog" className="size-[18px]" /></div>
        <div className="flex">
          <div className={`w-[173px] pl-[9px] ${BUTTON}`}>
            <Icon name="clock" className="size-[18px]" />
            <span className="grow pl-[8.2px]">Last 30 minutes</span>
            <Icon name="down" className="mr-[9px] size-4" />
          </div>
          <div className={`-ml-px w-9 ${BUTTON}`}><Icon name="zoomOut" className="size-[18px]" /></div>
        </div>
        <div className="flex">
          <div className={`w-9 ${BUTTON}`}><Icon name="sync" className="size-[18px]" /></div>
          <div className={`-ml-px w-[53.5px] gap-1 ${BUTTON}`}>5s<Icon name="down" className="size-4" /></div>
        </div>
        <div className={`w-9 ${BUTTON}`}><Icon name="monitor" className="size-[18px]" /></div>
      </div>
    </header>
  );
}

export default function App() {
  return (
    <div className="h-screen w-screen overflow-hidden bg-[#111216]">
      <div className="relative flex h-[826px] w-[2500px] flex-col gap-2 overflow-hidden pr-[14px] pl-[15.5px] font-[Roboto,sans-serif] text-[#c9c8da] [zoom:1.6384]">
        <div className="absolute top-[31px] -left-[14.4px] flex size-6 items-center justify-end rounded-full bg-[#1e1f24] ring-1 ring-[#2a2b30] ring-inset">
          <span className="mr-[8.6px] size-[3px] rotate-45 bg-[#c7c6d8]" />
        </div>
        <Header />
        <div className="mt-1 flex h-8 shrink-0 gap-[4.4px]">
          <div className="flex w-[93.3px] items-center justify-center rounded-[2px] bg-[#18191d] text-xs font-medium tracking-[0.24px] text-[#6e9fff] ring-1 ring-[#222327] ring-inset">Measurement</div>
          <div className="flex w-[268.7px] items-center rounded-[2px] pl-[8.6px] text-sm tracking-[0.18px] ring-1 ring-[#2a2b30] ring-inset">
            <span className="w-[237.4px] whitespace-nowrap">http_req_duration + http_req_blocked</span>
            <Icon name="down" className="size-3.5" />
          </div>
        </div>
        <RowTitle>Dashboard Row</RowTitle>
        <div className="grid h-[258px] shrink-0 grid-cols-4 gap-2">
          <BarPanel
            title="Virtual Users" left={31} points={VUS} yLabels={["4 K", "3 K", "2 K", "1 K", "0"]}
            x0={96} x1={1204} first={165} step={184.8} labelRight={84}
            legend={<LegendTable name="Active VUs" heads={["min", "max"]} values={["1", "3.00 K"]} width="w-[52.8px]" />}
          />
          <BarPanel
            title="Requests per Second" left={1270.25} points={RPS} dips={RPS_DIPS} yLabels={["6 K", "4 K", "2 K", "0"]}
            x0={1336} x1={2444} first={1405} step={184.8} labelRight={1324}
            legend={<LegendTable name="Requests per Second" heads={["max", "avg"]} values={["5.88 K", "2.53 K"]} width="w-[51.7px]" />}
          />
          <ErrorsPanel />
          <BarPanel
            title="Checks Per Second" left={3748.75} points={RPS} dips={RPS_DIPS} yLabels={["6000", "4000", "2000", "0"]}
            x0={3832} x1={4921} first={3899} step={181.7} labelRight={3821}
            legend={<LegendTable name="status is 200" heads={["avg", "total"]} values={["2516", "1233084"]} width="w-[65.4px]" />}
          />
        </div>
        <RowTitle actions>http_req_duration</RowTitle>
        <div className="grid h-[106px] shrink-0 grid-cols-6 gap-2">
          {STATS.map((s) => (
            <Panel key={s.name} title={`http_req_duration (${s.name})`} loading={s.loading}>
              <div className="flex items-baseline justify-center pt-[12.6px] leading-none font-medium tracking-[0.15px]">
                <span className="text-[47.2px] leading-none">{s.value}</span>
                <span className="ml-[5.8px] text-[28.3px] leading-none">{s.unit}</span>
              </div>
            </Panel>
          ))}
        </div>
        <div className="grid h-[258px] shrink-0 grid-cols-2 gap-2">
          <TimeSeriesPanel />
          <HeatmapPanel />
        </div>
        <RowTitle>http_req_blocked</RowTitle>
      </div>
    </div>
  );
}
